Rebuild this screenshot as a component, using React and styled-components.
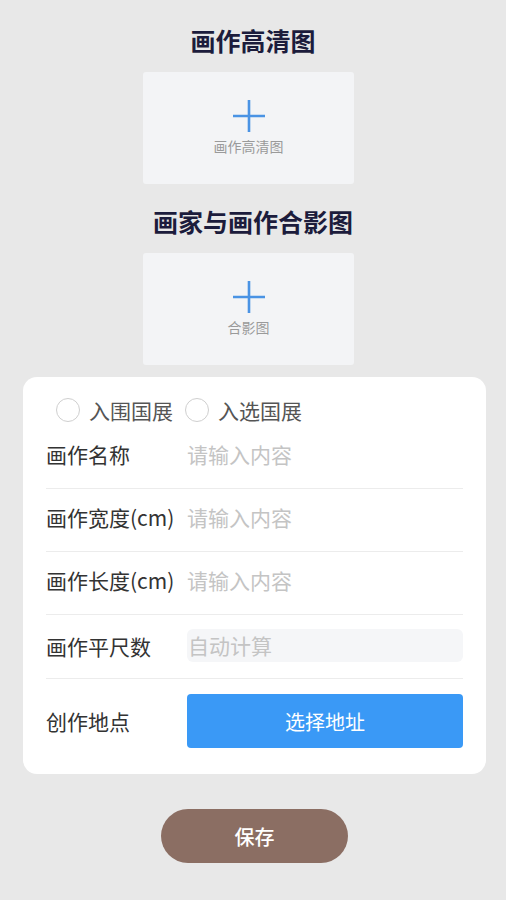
import styled, { createGlobalStyle } from "styled-components";

const GlobalStyle = createGlobalStyle`
  html, body {
    margin: 0;
    padding: 0;
    background: #e8e8e8;
  }
  body {
    font-family: "Noto Sans CJK SC", "Noto Sans", sans-serif;
  }
`;

const fields = [
  { label: "画作名称", placeholder: "请输入内容" },
  { label: "画作宽度(cm)", placeholder: "请输入内容" },
  { label: "画作长度(cm)", placeholder: "请输入内容" },
];

function PlusIcon() {
  return (
    <svg width="34" height="34" viewBox="0 0 34 34">
      <path d="M17 1v32M1 17h32" stroke="#4a93e4" strokeWidth="2.6" fill="none" />
    </svg>
  );
}

export default function App() {
  return (
    <Page>
      <GlobalStyle />
      <Title>画作高清图</Title>
      <Upload>
        <PlusIcon />
        <UploadCaption>画作高清图</UploadCaption>
      </Upload>

      <Title $gap={21}>画家与画作合影图</Title>
      <Upload>
        <PlusIcon />
        <UploadCaption>合影图</UploadCaption>
      </Upload>

      <Card>
        <RadioRow>
          <Radio>
            <Circle />
            入围国展
          </Radio>
          <Radio>
            <Circle />
            入选国展
          </Radio>
        </RadioRow>

        {fields.map((f) => (
          <Row key={f.label} $lift={6}>
            <Label>{f.label}</Label>
            <Input placeholder={f.placeholder} />
          </Row>
        ))}

        <Row $tall={64} $lift={2}>
          <Label>画作平尺数</Label>
          <ReadOnly>自动计算</ReadOnly>
        </Row>

        <Row $last>
          <Label>创作地点</Label>
          <PickButton>选择地址</PickButton>
        </Row>
      </Card>

      <SaveButton>保存</SaveButton>
    </Page>
  );
}

const Page = styled.main`
  display: flex;
  flex-direction: column;
  min-height: 900px;
  padding-top: 24px;
  box-sizing: border-box;
`;

const Title = styled.h2`
  margin: ${(p) => p.$gap || 0}px 0 16px;
  text-align: center;
  font-size: 25px;
  line-height: 32px;
  font-weight: 700;
  color: #1c1c3c;
`;

const Upload = styled.div`
  width: 211px;
  height: 112px;
  margin-left: calc(50% - 110px);
  background: #f3f4f6;
  border-radius: 3px;
  display: flex;
  flex-direction: column;
  align-items: center;
  justify-content: center;
  padding-bottom: 2px;
  box-sizing: border-box;
`;

const UploadCaption = styled.div`
  margin-top: 4px;
  font-size: 14px;
  line-height: 18px;
  color: #9a9a9a;
`;

const Card = styled.section`
  margin: 12px 20px 0 23px;
  background: #fff;
  border-radius: 14px;
  padding: 20px 23px 11px;
`;

const RadioRow = styled.div`
  display: flex;
  align-items: center;
  gap: 12px;
  height: 29px;
  padding-left: 10px;
  padding-bottom: 3px;
  box-sizing: border-box;
`;

const Radio = styled.label`
  display: flex;
  align-items: center;
  gap: 9px;
  font-size: 21px;
  color: #555;
`;

const Circle = styled.span`
  width: 24px;
  height: 24px;
  box-sizing: border-box;
  border-radius: 50%;
  border: 1.5px solid #cfcfcf;
`;

const Row = styled.div`
  display: grid;
  grid-template-columns: 141px 1fr;
  align-items: center;
  box-sizing: border-box;
  height: ${(p) => (p.$last ? 84 : p.$tall || 63)}px;
  padding-bottom: ${(p) => p.$lift || 0}px;
  border-bottom: ${(p) => (p.$last ? "none" : "1px solid #ececec")};
`;

const Label = styled.span`
  font-size: 21px;
  color: #333;
  white-space: nowrap;
`;

const Input = styled.input`
  border: none;
  outline: none;
  padding: 0;
  font-family: inherit;
  font-size: 21px;
  color: #333;
  background: transparent;
  &::placeholder {
    color: #c4c4c4;
  }
`;

const ReadOnly = styled.div`
  height: 33px;
  line-height: 33px;
  background: #f5f6f8;
  border-radius: 6px;
  padding-left: 1px;
  font-size: 21px;
  color: #c4c4c4;
`;

const PickButton = styled.button`
  height: 54px;
  border: none;
  border-radius: 4px;
  background: #3a99f6;
  color: #fff;
  font-family: inherit;
  font-size: 20px;
`;

const SaveButton = styled.button`
  margin: 35px 0 0 calc(50% - 92px);
  width: 187px;
  height: 54px;
  border: none;
  border-radius: 27px;
  background: #8b6e63;
  color: #fff;
  font-family: inherit;
  font-size: 20px;
  font-weight: 500;
`;
